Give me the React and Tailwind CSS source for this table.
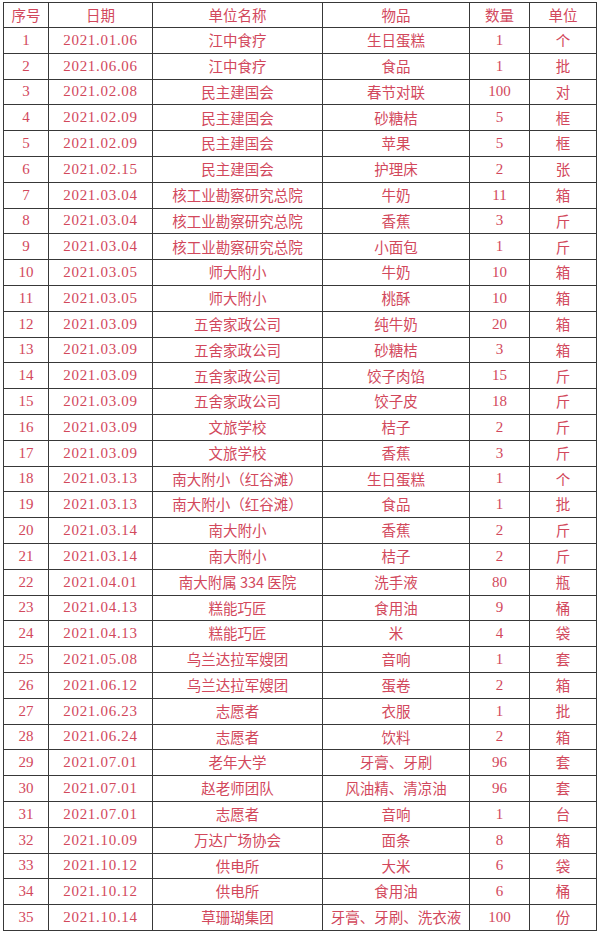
import React from 'react';

const rows = [
  ['2021.01.06', '江中食疗', '生日蛋糕', '1', '个'],
  ['2021.06.06', '江中食疗', '食品', '1', '批'],
  ['2021.02.08', '民主建国会', '春节对联', '100', '对'],
  ['2021.02.09', '民主建国会', '砂糖桔', '5', '框'],
  ['2021.02.09', '民主建国会', '苹果', '5', '框'],
  ['2021.02.15', '民主建国会', '护理床', '2', '张'],
  ['2021.03.04', '核工业勘察研究总院', '牛奶', '11', '箱'],
  ['2021.03.04', '核工业勘察研究总院', '香蕉', '3', '斤'],
  ['2021.03.04', '核工业勘察研究总院', '小面包', '1', '斤'],
  ['2021.03.05', '师大附小', '牛奶', '10', '箱'],
  ['2021.03.05', '师大附小', '桃酥', '10', '箱'],
  ['2021.03.09', '五舍家政公司', '纯牛奶', '20', '箱'],
  ['2021.03.09', '五舍家政公司', '砂糖桔', '3', '箱'],
  ['2021.03.09', '五舍家政公司', '饺子肉馅', '15', '斤'],
  ['2021.03.09', '五舍家政公司', '饺子皮', '18', '斤'],
  ['2021.03.09', '文旅学校', '桔子', '2', '斤'],
  ['2021.03.09', '文旅学校', '香蕉', '3', '斤'],
  ['2021.03.13', '南大附小（红谷滩）', '生日蛋糕', '1', '个'],
  ['2021.03.13', '南大附小（红谷滩）', '食品', '1', '批'],
  ['2021.03.14', '南大附小', '香蕉', '2', '斤'],
  ['2021.03.14', '南大附小', '桔子', '2', '斤'],
  ['2021.04.01', '南大附属 334 医院', '洗手液', '80', '瓶'],
  ['2021.04.13', '糕能巧匠', '食用油', '9', '桶'],
  ['2021.04.13', '糕能巧匠', '米', '4', '袋'],
  ['2021.05.08', '乌兰达拉军嫂团', '音响', '1', '套'],
  ['2021.06.12', '乌兰达拉军嫂团', '蛋卷', '2', '箱'],
  ['2021.06.23', '志愿者', '衣服', '1', '批'],
  ['2021.06.24', '志愿者', '饮料', '2', '箱'],
  ['2021.07.01', '老年大学', '牙膏、牙刷', '96', '套'],
  ['2021.07.01', '赵老师团队', '风油精、清凉油', '96', '套'],
  ['2021.07.01', '志愿者', '音响', '1', '台'],
  ['2021.10.09', '万达广场协会', '面条', '8', '箱'],
  ['2021.10.12', '供电所', '大米', '6', '袋'],
  ['2021.10.12', '供电所', '食用油', '6', '桶'],
  ['2021.10.14', '草珊瑚集团', '牙膏、牙刷、洗衣液', '100', '份'],
];

const cell = 'border border-[#383838] text-center align-middle p-0 leading-none';
const num = { fontFamily: '"Liberation Serif", "Noto Sans CJK SC", serif' };

export default function App() {
  return (
    <div
      className="w-[600px] h-[935px] bg-white pt-[2px] pl-[3px] text-[#d2485c] text-[14.5px]"
      style={{ fontFamily: '"Noto Sans CJK SC", sans-serif' }}
    >
      <table className="table-fixed border-collapse w-[593px]">
        <colgroup>
          <col className="w-[45px]" />
          <col className="w-[104px]" />
          <col className="w-[170px]" />
          <col className="w-[147px]" />
          <col className="w-[60px]" />
          <col className="w-[67px]" />
        </colgroup>
        <thead>
          <tr className="h-[25px]">
            <th className={`${cell} font-normal`}>序号</th>
            <th className={`${cell} font-normal`}>日期</th>
            <th className={`${cell} font-normal`}>单位名称</th>
            <th className={`${cell} font-normal`}>物品</th>
            <th className={`${cell} font-normal`}>数量</th>
            <th className={`${cell} font-normal`}>单位</th>
          </tr>
        </thead>
        <tbody>
          {rows.map((r, i) => (
            <tr key={i} className="h-[25.8px]">
              <td className={`${cell} text-[15px]`} style={num}>{i + 1}</td>
              <td className={`${cell} text-[15px] tracking-[0.7px]`} style={num}>{r[0]}</td>
              <td className={cell}>{r[1]}</td>
              <td className={cell}>{r[2]}</td>
              <td className={`${cell} text-[15px]`} style={num}>{r[3]}</td>
              <td className={cell}>{r[4]}</td>
            </tr>
          ))}
        </tbody>
      </table>
    </div>
  );
}
